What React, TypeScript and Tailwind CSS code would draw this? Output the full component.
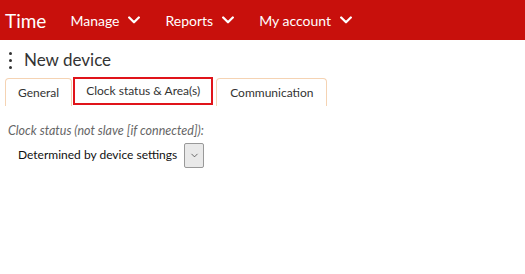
import { ChevronDown } from "lucide-react";

const menu = ["Manage", "Reports", "My account"];

function Caret() {
  return (
    <svg width="12" height="8" viewBox="0 0 12 8" fill="none">
      <polyline points="1.2,1.5 6,6.2 10.8,1.5" stroke="white" strokeWidth="2.3" strokeLinecap="round" strokeLinejoin="round" />
    </svg>
  );
}

export default function App() {
  return (
    <div className="h-[274px] w-[525px] bg-white font-['Lato',sans-serif] text-[#333]">
      <div className="flex h-10 items-center bg-[#c8100c] pl-[5px] text-white">
        <span className="mr-[24px] text-[19px] leading-none">Time</span>
        {menu.map((m) => (
          <div key={m} className="mr-[25px] flex items-center gap-[9px] text-[14px]">
            <span>{m}</span>
            <Caret />
          </div>
        ))}
      </div>

      <div className="flex items-center pl-[9px] pt-[10px]">
        <div className="flex w-[3px] flex-col gap-[4px]">
          <span className="h-[3px] w-[3px] rounded-full bg-[#333]" />
          <span className="h-[3px] w-[3px] rounded-full bg-[#333]" />
          <span className="h-[3px] w-[3px] rounded-full bg-[#333]" />
        </div>
        <span className="ml-[12px] text-[17px] leading-[20px]">New device</span>
      </div>

      <div className="mt-[7px] flex items-end pl-[5px] text-[12px]">
        <div className="flex h-[28px] items-center rounded-t-[4px] border border-b-0 border-[#f5d3b3] px-[12px]">
          General
        </div>
        <div className="mb-[1px] ml-[1px] flex h-[28px] items-center border-2 border-[#e0141a] px-[11px]">
          Clock status &amp; Area(s)
        </div>
        <div className="ml-[3px] flex h-[28px] items-center rounded-t-[4px] border border-b-0 border-[#f5d3b3] px-[13px]">
          Communication
        </div>
      </div>

      <div className="pl-[8px] pt-[16px]">
        <div className="text-[12.5px] italic text-[#666]">
          Clock status (not slave [if connected]):
        </div>
        <div className="mt-[2px] flex items-center pl-[10px]">
          <span className="text-[12px] text-[#111]">Determined by device settings</span>
          <div className="ml-[7px] flex h-[25px] w-[20px] items-center justify-center rounded-[2px] border border-[#999] bg-[#e9e9e9]">
            <ChevronDown size={11} strokeWidth={1.5} className="text-[#333]" />
          </div>
        </div>
      </div>
    </div>
  );
}
